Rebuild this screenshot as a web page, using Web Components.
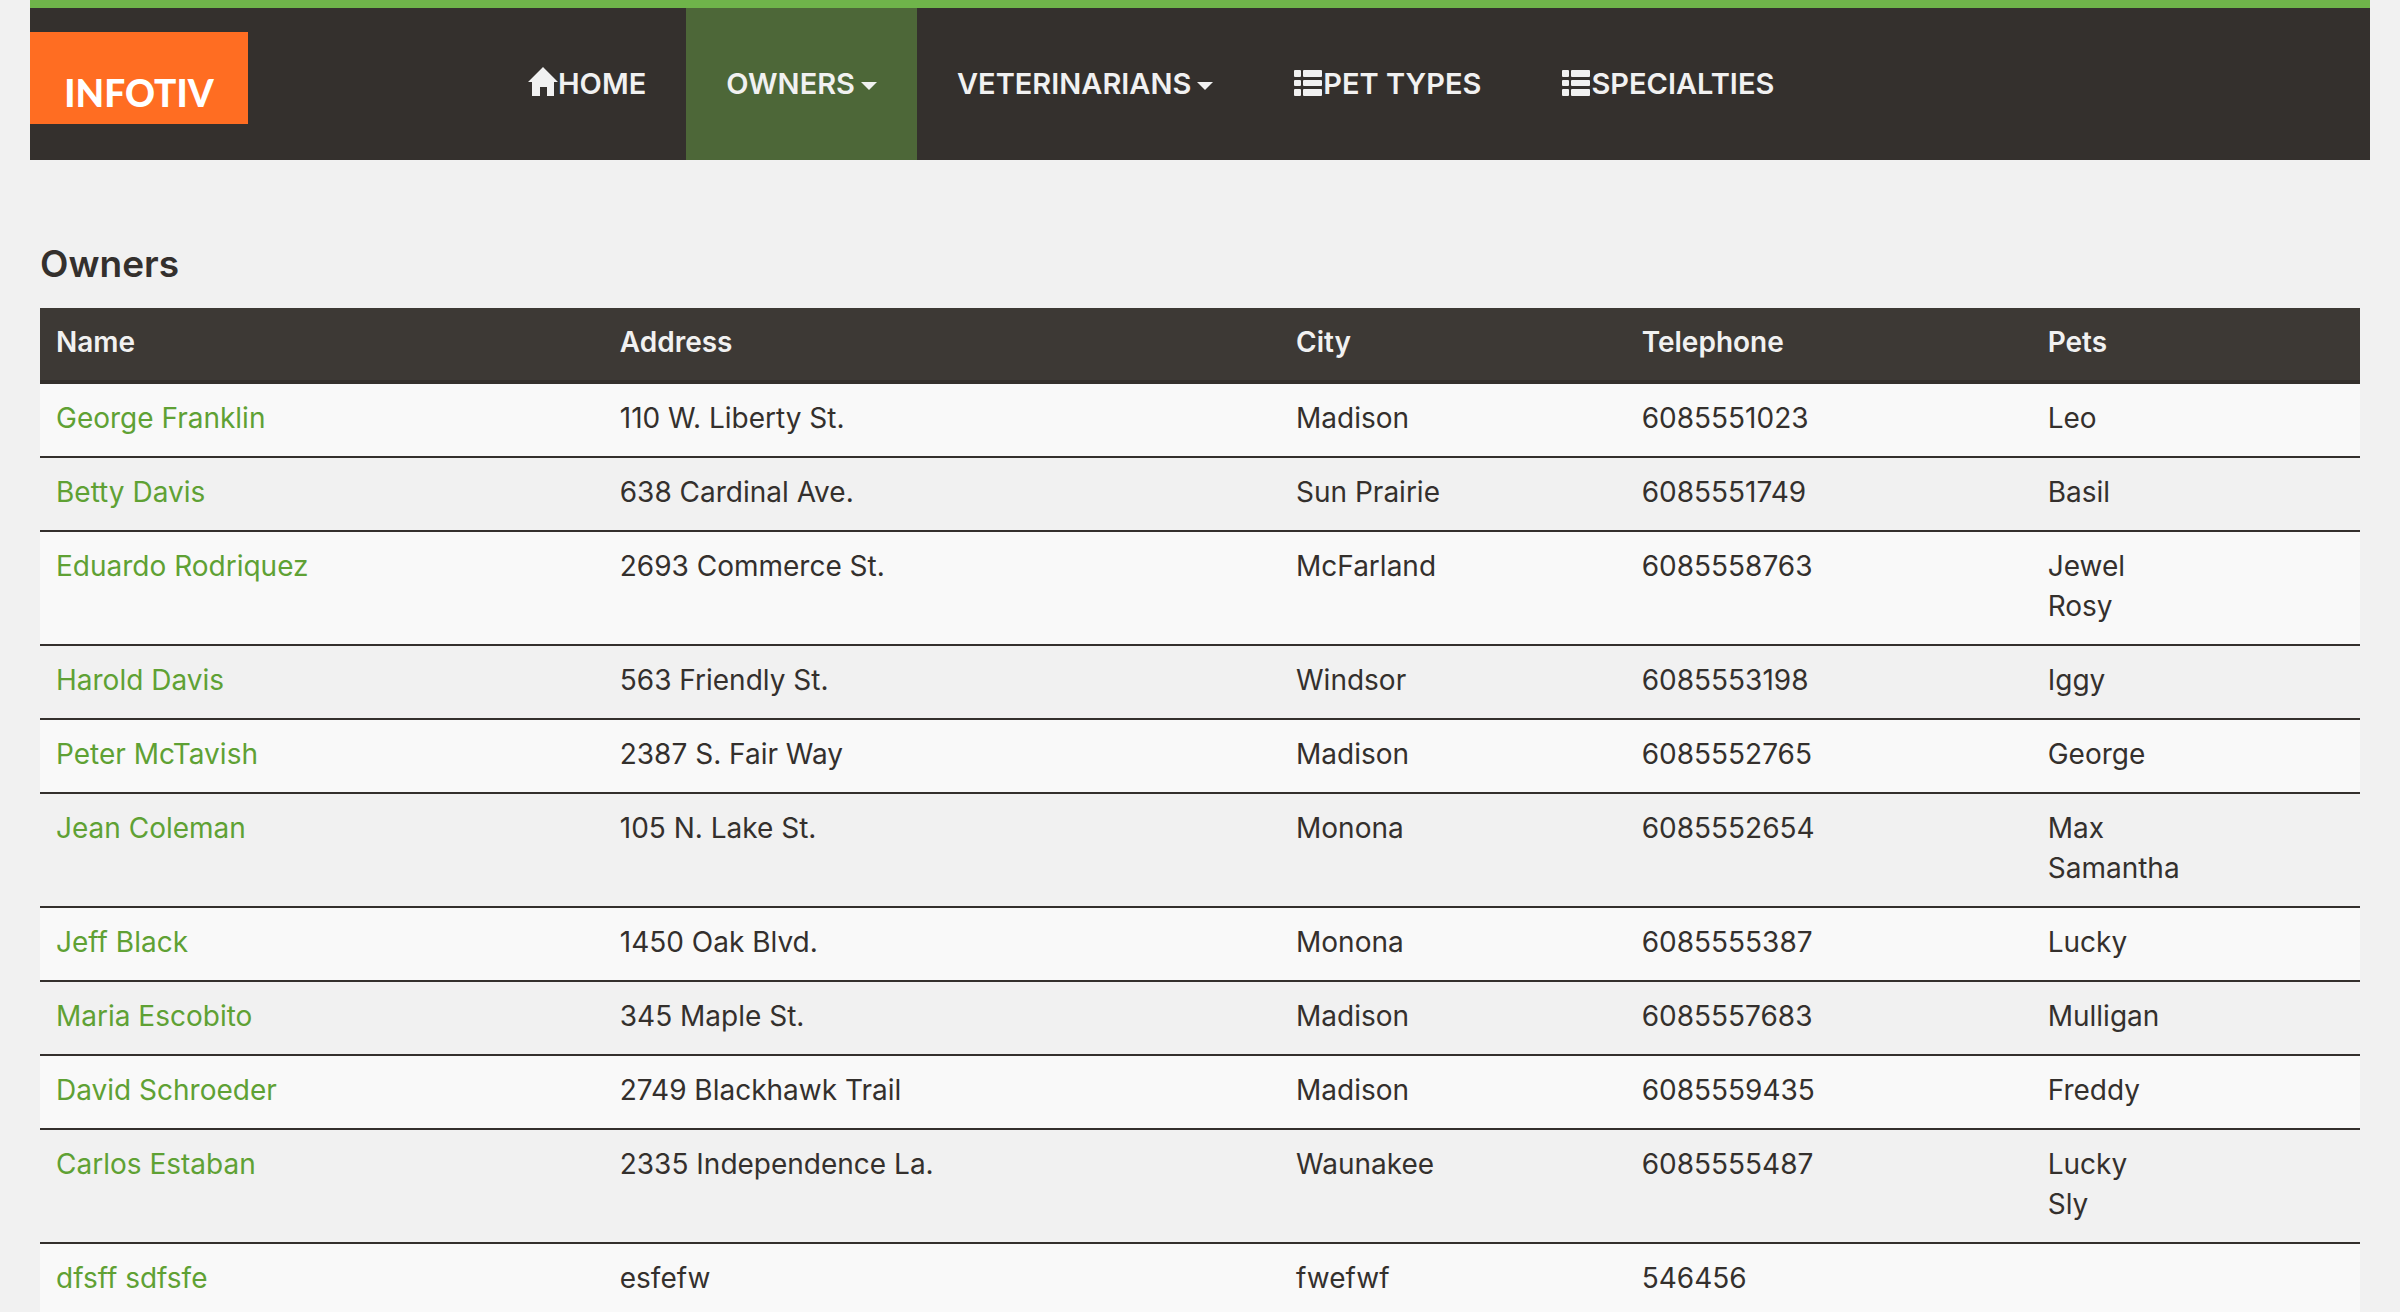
<!DOCTYPE html>
<html lang="en">
<head>
<meta charset="utf-8">
<title>Owners</title>
<meta name="viewport" content="width=device-width, initial-scale=1">
<style>
  html { background: #f1f1f1; }
  body {
    margin: 0;
    padding: 0 30px;
    background: #f1f1f1;
    color: #34302d;
    font-family: Inter, "Liberation Sans", sans-serif;
    font-size: 28px;
    line-height: 40px;
  }
</style>
</head>
<body>
<clinic-navbar>
  <brand-logo slot="brand">INFOTIV</brand-logo>
  <nav-item icon="home">HOME</nav-item>
  <nav-item menu active>OWNERS</nav-item>
  <nav-item menu>VETERINARIANS</nav-item>
  <nav-item icon="list">PET TYPES</nav-item>
  <nav-item icon="list">SPECIALTIES</nav-item>
</clinic-navbar>
<page-section>
  <span slot="title">Owners</span>
  <owners-table></owners-table>
</page-section>

<script>
function shadow(el, html) {
  const root = el.attachShadow({ mode: "open" });
  root.innerHTML = html;
  return root;
}

customElements.define("brand-logo", class extends HTMLElement {
  constructor() {
    super();
    shadow(this, `
      <style>
        :host { display: block; }
        a {
          display: flex;
          align-items: flex-end;
          justify-content: center;
          box-sizing: border-box;
          width: 218px;
          height: 92px;
          padding-bottom: 11px;
          background: #ff6d22;
          color: #fff;
          font: 900 37px/40px Lato, sans-serif;
          text-decoration: none;
        }
      </style>
      <a href="#"><slot></slot></a>`);
  }
});

const ICONS = {
  home: `<svg viewBox="0 0 30 30" width="30" height="30" aria-hidden="true">
    <path fill="currentColor" d="M15 0 30 15H26V29H19V20H12V29H4V15H0Z"/></svg>`,
  list: `<svg viewBox="0 0 30 30" width="30" height="30" aria-hidden="true">
    <g fill="currentColor">
      <rect x="1" y="3" width="7" height="7" rx="1"/><rect x="10" y="3" width="19" height="7" rx="1"/>
      <rect x="1" y="13" width="7" height="6" rx="1"/><rect x="10" y="13" width="19" height="6" rx="1"/>
      <rect x="1" y="22" width="7" height="7" rx="1"/><rect x="10" y="22" width="19" height="7" rx="1"/>
    </g></svg>`
};

customElements.define("nav-item", class extends HTMLElement {
  connectedCallback() {
    if (this.shadowRoot) return;
    const menu = this.hasAttribute("menu");
    const icon = ICONS[this.getAttribute("icon")] || "";
    const body = `${icon}<slot></slot>${menu ? '<i class="caret"></i>' : ""}`;
    shadow(this, `
      <style>
        :host { display: flex; }
        a, button {
          display: flex;
          align-items: center;
          margin: 0;
          padding: 0 40px;
          border: 0;
          background: none;
          color: #f1f1f1;
          font: 600 29px/40px Inter, "Liberation Sans", sans-serif;
          text-decoration: none;
          cursor: pointer;
        }
        :host([active]) button { background: #4d6738; }
        svg { flex: none; margin-bottom: 4px; }
        .caret {
          margin: 4px 0 0 6px;
          border: 8px solid transparent;
          border-top-color: currentColor;
          border-bottom: 0;
        }
      </style>
      ${menu ? `<button type="button" aria-haspopup="true">${body}</button>` : `<a href="#">${body}</a>`}`);
  }
});

customElements.define("clinic-navbar", class extends HTMLElement {
  constructor() {
    super();
    shadow(this, `
      <style>
        :host { display: block; background: #34302d; border-top: 8px solid #6fb44a; }
        header { display: flex; min-height: 152px; }
        .brand { padding-top: 24px; margin-right: 240px; }
        nav { display: flex; }
      </style>
      <header>
        <div class="brand"><slot name="brand"></slot></div>
        <nav><slot></slot></nav>
      </header>`);
  }
});

customElements.define("page-section", class extends HTMLElement {
  constructor() {
    super();
    shadow(this, `
      <style>
        :host { display: block; padding: 84px 10px 0; }
        h2 { margin: 0 0 24px; font: 600 37px/40px Inter, "Liberation Sans", sans-serif; }
      </style>
      <main><h2><slot name="title"></slot></h2><slot></slot></main>`);
  }
});

const OWNERS = [
  ["George Franklin", "110 W. Liberty St.", "Madison", "6085551023", ["Leo"]],
  ["Betty Davis", "638 Cardinal Ave.", "Sun Prairie", "6085551749", ["Basil"]],
  ["Eduardo Rodriquez", "2693 Commerce St.", "McFarland", "6085558763", ["Jewel", "Rosy"]],
  ["Harold Davis", "563 Friendly St.", "Windsor", "6085553198", ["Iggy"]],
  ["Peter McTavish", "2387 S. Fair Way", "Madison", "6085552765", ["George"]],
  ["Jean Coleman", "105 N. Lake St.", "Monona", "6085552654", ["Max", "Samantha"]],
  ["Jeff Black", "1450 Oak Blvd.", "Monona", "6085555387", ["Lucky"]],
  ["Maria Escobito", "345 Maple St.", "Madison", "6085557683", ["Mulligan"]],
  ["David Schroeder", "2749 Blackhawk Trail", "Madison", "6085559435", ["Freddy"]],
  ["Carlos Estaban", "2335 Independence La.", "Waunakee", "6085555487", ["Lucky", "Sly"]],
  ["dfsff sdfsfe", "esfefw", "fwefwf", "546456", []]
];

customElements.define("owners-table", class extends HTMLElement {
  constructor() {
    super();
    const rows = OWNERS.map(([name, address, city, phone, pets]) => `
      <tr>
        <td><a href="#">${name}</a></td><td>${address}</td><td>${city}</td><td>${phone}</td>
        <td>${pets.map(p => `<div>${p}</div>`).join("")}</td>
      </tr>`).join("");
    shadow(this, `
      <style>
        :host { display: block; }
        table { width: 100%; border-spacing: 0; table-layout: fixed; }
        th, td { box-sizing: border-box; padding: 14px 16px 18px; text-align: left; vertical-align: top; }
        th { background: #3d3935; color: #f1f1f1; font-weight: 600; border-bottom: 4px solid #34302d; }
        td { border-bottom: 2px solid #34302d; }
        tbody tr:nth-child(odd) { background: #f9f9f9; }
        a { color: #5fa134; text-decoration: none; }
        .name { width: 24.3%; }
        .address { width: 29.15%; }
        .city { width: 14.9%; }
        .phone { width: 17.5%; }
      </style>
      <table>
        <thead><tr>
          <th class="name">Name</th><th class="address">Address</th><th class="city">City</th>
          <th class="phone">Telephone</th><th>Pets</th>
        </tr></thead>
        <tbody>${rows}</tbody>
      </table>`);
  }
});
</script>
</body>
</html>
